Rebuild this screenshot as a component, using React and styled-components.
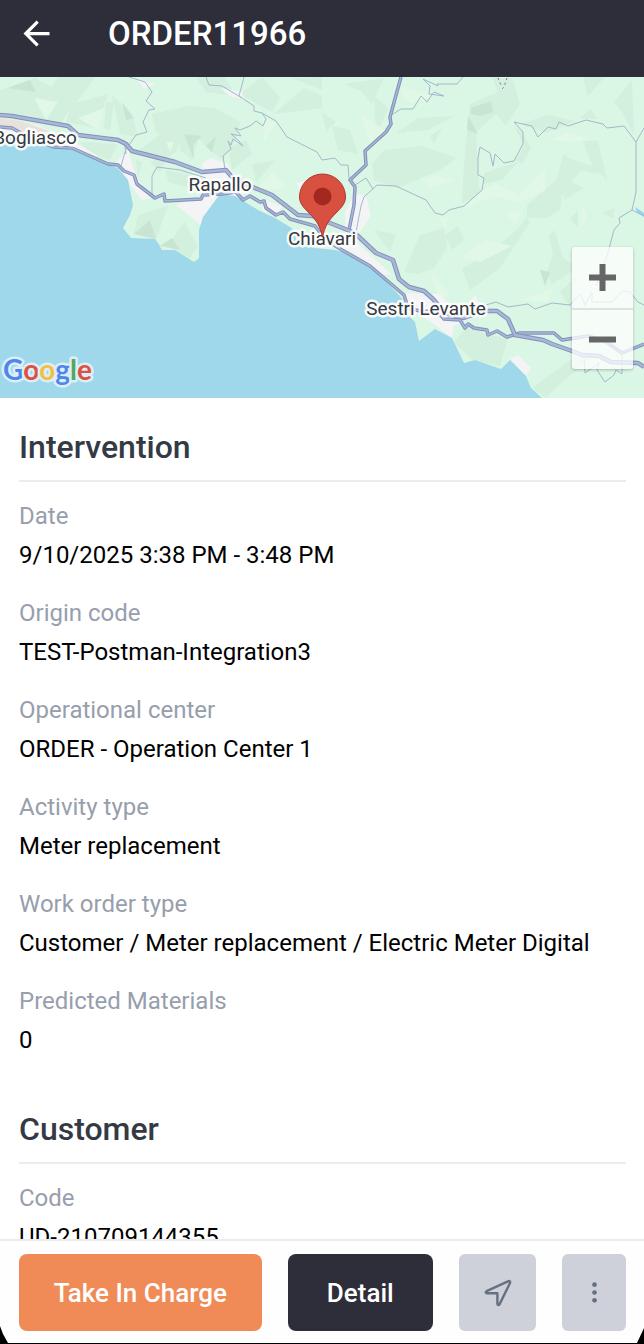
import styled, { createGlobalStyle } from "styled-components";
import { MdArrowBack } from "react-icons/md";
import { IoEllipsisVertical } from "react-icons/io5";

const GlobalStyle = createGlobalStyle`
    * {
        box-sizing: border-box;
    }

    body {
        margin: 0;
        background-color: #000000;
        font-family: Roboto, "Liberation Sans", sans-serif;
    }

    button {
        border: none;
        padding: 0;
        font-family: inherit;
        cursor: pointer;
    }
`;

const Screen = styled.div`
    display: flex;
    flex-direction: column;
    height: 100vh;
    padding-bottom: 1px;
`;

const Header = styled.header`
    display: flex;
    align-items: center;
    flex-shrink: 0;
    gap: 52px;
    height: 77px;
    padding: 0 17px 10px;
    background-color: #2d2e3a;
    color: #ffffff;

    h1 {
        margin: 0;
        font-size: 33px;
        line-height: 40px;
        font-weight: 500;
    }
`;

const BackButton = styled.button`
    display: flex;
    background: none;
    color: #ffffff;
    font-size: 39px;
`;

const Content = styled.main`
    flex: 1;
    min-height: 0;
    overflow: hidden;
    background-color: #ffffff;
`;

const MapBox = styled.div`
    position: relative;
    height: 321px;

    > svg {
        display: block;
        width: 100%;
        height: 100%;
    }
`;

const ZoomControl = styled.div`
    position: absolute;
    right: 11px;
    bottom: 29px;
    width: 61px;
    border-radius: 3px;
    background-color: rgba(255, 255, 255, 0.75);
    box-shadow: 0 1px 3px rgba(0, 0, 0, 0.25);
`;

const ZoomButton = styled.button`
    display: flex;
    align-items: center;
    justify-content: center;
    width: 100%;
    height: 61px;
    background: none;

    & + & {
        border-top: 2px solid rgba(0, 0, 0, 0.1);
    }
`;

const Section = styled.section`
    padding: 25px 18px 0 19px;

    h2 {
        margin: 0;
        padding-bottom: 9px;
        border-bottom: 2px solid #ebecf0;
        color: #343a44;
        font-size: 32px;
        line-height: 48px;
        font-weight: 500;
    }

    dl {
        margin: 0;
        padding-top: 16px;
    }
`;

const Field = styled.div`
    margin-bottom: 18px;

    dt {
        color: #979eac;
        font-size: 24px;
        line-height: 36px;
    }

    dd {
        margin: 0;
        color: #000000;
        font-size: 24px;
        line-height: 43px;
    }
`;

const Footer = styled.footer`
    display: flex;
    flex-shrink: 0;
    gap: 26px;
    padding: 13px 18px 12px 19px;
    border-top: 2px solid #ebebec;
    background-color: #fefefe;
    clip-path: polygon(0 0, 100% 0, 100% calc(100% - 15px), calc(100% - 7px) 100%, 8px 100%, 3px calc(100% - 9px), 0 calc(100% - 17px));
`;

const ActionButton = styled.button`
    flex: ${(props) => props.$grow} 1 0;
    height: 77px;
    border-radius: 8px;
    background-color: ${(props) => props.$color};
    color: #ffffff;
    font-size: 26px;
    line-height: 30px;
    font-weight: 500;
    white-space: nowrap;
`;

const IconButton = styled.button`
    display: flex;
    align-items: center;
    justify-content: center;
    width: ${(props) => props.$width}px;
    height: 77px;
    border-radius: 6px;
    background-color: #ced1d9;
    color: #677080;
    font-size: 25px;
`;

const PlaceName = styled.text`
    font-size: 19px;
    fill: #36393d;
    stroke: #ffffff;
    stroke-width: 5px;
    stroke-linejoin: round;
    stroke-opacity: 0.9;
    paint-order: stroke;
    text-anchor: middle;
`;

const Logo = styled.text`
    font-family: Lato, sans-serif;
    font-size: 28px;
    font-weight: 700;
    stroke: #dceff8;
    stroke-width: 5px;
    stroke-linejoin: round;
    paint-order: stroke;
`;

const sea =
    "0,134 20,139 50,147 75,150 105,164 118,168 128,180 133,205 130,215 123,228 131,238 155,239 158,243 162,250 175,250 194,262 199,258 199,230 203,217 220,194 235,196 245,202 258,210 275,218 290,227 300,236 315,248 335,250 350,254 380,275 400,296 405,304 408,315 415,322 419,341 435,329 452,338 464,363 475,360 501,369 510,360 526,376 531,388 542,398 0,398";

const hills = [
    "0,90 35,78 75,100 60,125 30,116 0,112",
    "58,77 95,77 70,112 50,90",
    "72,104 108,94 96,128 66,122",
    "106,102 114,102 110,130 104,128",
    "112,95 132,115 138,137 120,134",
    "152,114 188,106 215,108 240,122 236,139 222,160 210,150 196,136 176,140 156,132",
    "140,150 165,130 182,136 176,152 160,162",
    "180,128 200,134 192,160 180,150",
    "150,162 172,150 160,172",
    "196,77 224,77 236,96 206,92",
    "240,94 262,77 280,98 272,112",
    "274,114 304,88 322,96 322,108",
    "292,78 322,77 322,90",
    "228,148 246,140 252,154 232,170",
    "252,164 276,160 256,182",
    "166,170 205,178 196,190 168,182",
    "80,142 118,144 110,160 90,154",
    "136,160 142,162 138,178",
    "138,215 168,206 162,222 156,240 134,234",
    "168,246 184,222 198,246 190,258",
    "344,84 384,78 372,104 362,92",
    "374,96 388,108 376,138",
    "322,112 336,122 326,132",
    "332,126 350,130 358,154 338,150",
    "372,164 384,150 422,146 456,158 440,170 398,188 374,180",
    "396,133 418,118 454,116 428,130",
    "430,136 442,128 434,144",
    "470,104 498,92 492,77 513,79 520,104 506,126 496,114 476,132 478,176 480,195 462,203 464,165",
    "520,124 548,115 575,121 560,127 545,133",
    "514,126 522,132 531,148 522,164 516,160 524,146",
    "484,173 518,162 502,180 484,184",
    "564,154 582,168 562,196 560,210 546,218 527,218 527,205 556,180",
    "562,156 598,168 600,174 568,168",
    "582,139 598,141 607,180 592,165",
    "562,178 584,188 564,200",
    "614,102 632,80 634,135 622,112",
    "583,77 605,77 588,96",
    "580,118 590,109 597,119",
    "527,218 530,222 500,268 470,290 462,268 490,254 516,230",
    "420,235 444,228 447,248 434,268 418,274 404,272",
    "445,235 458,226 464,240 452,250",
    "549,235 555,230 563,258 578,268 552,284 546,274 553,255",
    "602,213 615,208 613,218",
    "570,218 578,210 578,228",
    "374,230 396,234 390,252",
    "454,342 468,326 488,335 508,338 500,366 472,360",
    "532,388 576,356 592,358 562,382 546,398",
    "560,292 576,276 572,310",
];

const darkHills = [
    "134,234 150,220 156,239",
    "160,246 172,238 180,250",
    "471,108 491,101 493,112 480,116 471,114",
    "540,270 550,272 545,286",
    "8,88 30,80 36,92",
    "122,102 134,118 126,120",
    "184,134 202,136 193,144 194,160 188,144",
    "206,146 216,136 212,152",
    "468,116 478,134 467,130",
];

const lightHills = [
    "34,98 58,102 46,120",
    "78,118 104,108 98,130",
    "166,142 174,142 170,152",
    "262,116 276,124 264,142",
    "258,188 272,172 286,186 276,190",
    "360,114 388,132 372,148",
    "420,180 436,176 456,180 430,188",
    "550,140 568,132 594,140 568,142",
    "505,212 523,211 515,224",
    "460,258 485,240 512,246 480,262",
    "462,210 482,190 496,184 520,195 545,168 545,190 520,204 496,196 480,202",
    "430,270 450,296 438,298",
    "520,300 556,288 546,302",
    "582,205 587,216 581,230",
    "436,216 448,218 446,228",
    "396,86 434,96 410,104",
];

const towns = [
    "0,120 40,126 76,143 98,156 90,160 60,146 0,138",
    "118,160 128,150 136,176 150,198 142,200 130,184 116,168",
    "202,164 210,158 228,164 232,172 250,186 240,198 220,194 202,226 176,205 202,196",
    "264,200 282,206 276,216 262,210",
    "296,183 306,181 302,192",
    "345,212 355,193 366,196 371,216 360,232 346,228",
    "300,236 336,236 358,244 374,258 392,275 382,274 352,252 326,244",
    "404,293 440,294 450,306 468,310 474,294 486,312 454,326 452,338 434,324 410,310",
    "510,359 518,355 531,368 526,376",
    "220,88 242,92 244,100 230,96",
    "136,79 155,84 144,89",
];

const thinRoads = [
    "129,77 145,82 152,92 146,101 155,109 149,110 143,122 147,132 136,135 126,149 121,166",
    "124,140 126,154",
    "206,77 209,85 222,86 242,98 254,106 254,111 262,113 276,121 287,137 317,152 322,160",
    "244,77 239,96 242,98",
    "262,113 266,119 263,126 256,121 250,126 240,130 235,128 241,136 231,134 238,140 243,146 233,139 231,145 228,141 231,149 223,156 225,170",
    "152,196 152,176 157,167 180,170 206,178",
    "393,114 401,109 413,109 421,96 427,102 434,92 444,96 429,94 430,86 423,79 438,86 437,84 457,84 463,77",
    "322,160 335,158 341,165 348,165 349,178",
    "355,185 366,178 373,189",
    "356,232 361,206 364,197 377,185 396,186 426,200 435,213 443,215 449,210 464,206 482,190 484,178 478,175 478,158 480,147 490,153 493,166 495,154 504,163 514,161 523,144 523,132 514,122 532,126 538,137 548,127 556,129 559,122 568,126 586,120 603,124 607,128 624,126 636,142 644,128",
    "636,142 636,192 632,210 619,218 620,223 614,230 607,256 596,286",
    "632,210 644,216",
    "486,305 496,302 508,307 528,304 535,309 552,303 570,305 580,294 585,305 592,292 592,302 612,302 622,291 630,292 638,302 644,305",
    "584,358 585,373 599,363 597,370 605,382 614,375 616,370 622,374 622,352",
];

const mainRoads = [
    "0,127 12,128 30,138 54,147 72,148 108,164 118,165 124,171 134,175 137,184 155,198 164,194 165,201 201,199 203,195 222,194 236,192 243,200 250,196 260,202 264,201 266,208 276,215 283,212 290,219 315,226 326,240 342,250 370,266 404,295 408,308 420,311 438,312 444,319 460,320 465,328 468,324 474,328 487,330 488,335 497,331 507,337 520,333 554,333 562,340 588,336 605,341 622,353 644,344",
    "401,77 390,117 391,124 386,132 365,151 366,165 350,180 355,187 354,205 349,230",
];

const highway =
    "0,115 12,116 68,126 78,135 118,140 126,144 132,151 175,162 202,172 226,170 232,177 250,186 272,195 298,215 312,216 330,223 350,231 358,236 376,253 393,260 399,279 409,287 424,291 433,299 445,313 464,318 484,311 497,311 508,319 515,335 543,340 552,344 572,351 582,355 599,356 611,362 638,363 644,367";

const places = [
    { name: "Bogliasco", x: 35, y: 144 },
    { name: "Rapallo", x: 220, y: 191 },
    { name: "Chiavari", x: 322, y: 245 },
    { name: "Sestri Levante", x: 426, y: 315 },
];

const intervention = [
    { label: "Date", value: "9/10/2025 3:38 PM - 3:48 PM" },
    { label: "Origin code", value: "TEST-Postman-Integration3" },
    { label: "Operational center", value: "ORDER - Operation Center 1" },
    { label: "Activity type", value: "Meter replacement" },
    { label: "Work order type", value: "Customer / Meter replacement / Electric Meter Digital" },
    { label: "Predicted Materials", value: "0" },
];

const customer = [{ label: "Code", value: "UD-210709144355" }];

function AreaMap() {
    return (
        <svg viewBox="0 77 644 321" preserveAspectRatio="xMidYMid slice">
            <rect y="77" width="644" height="321" fill="#daf6e4" />
            {hills.map((points) => <polygon key={points} points={points} fill="#d3efde" />)}
            {darkHills.map((points) => <polygon key={points} points={points} fill="#c8e5d4" />)}
            {lightHills.map((points) => <polygon key={points} points={points} fill="#e0f8e5" />)}
            {towns.map((points) => <polygon key={points} points={points} fill="#f4f4f6" />)}
            <polygon points="0,118 20,121 50,131 40,134 0,128" fill="#e9e2dc" />
            <polygon points={sea} fill="#9fd8ea" />
            <polygon points="635,207 644,213 644,217 637,212" fill="#90d5ed" />
            <g fill="none" strokeLinejoin="round">
                {thinRoads.map((points) => <polyline key={points} points={points} stroke="#a4b8cc" />)}
                {mainRoads.map((points) => <polyline key={points} points={points} stroke="#8090ba" strokeWidth="3.500" />)}
                {mainRoads.map((points) => <polyline key={points} points={points} stroke="#a9b6d5" strokeWidth="1.500" />)}
                <polyline points={highway} stroke="#8090ba" strokeWidth="4.500" />
                <polyline points={highway} stroke="#a9b6d5" strokeWidth="2.500" />
                <path d="M498 78 l3 7 M507 78 l-3 9 l-2 2" stroke="#777777" strokeDasharray="2 3" />
            </g>
            {places.map((place) => (
                <PlaceName key={place.name} x={place.x} y={place.y}>{place.name}</PlaceName>
            ))}
            <path
                d="M322.500 237 C320 226 317 221 309 213 C303 207 299.500 203 299.500 197 A23 23 0 0 1 345.500 197 C345.500 203 342 207 336 213 C328 221 325 226 322.500 237 Z"
                fill="#d85040"
                stroke="#b13a2e"
            />
            <circle cx="322.500" cy="196.500" r="9" fill="#a3281f" />
            <Logo x="3" y="380">
                <tspan fill="#4f86ec">G</tspan>
                <tspan fill="#dc5142">o</tspan>
                <tspan fill="#f2bf42">o</tspan>
                <tspan fill="#4f86ec">g</tspan>
                <tspan fill="#58a65c">l</tspan>
                <tspan fill="#dc5142">e</tspan>
            </Logo>
        </svg>
    );
}

function NavigateIcon() {
    return (
        <svg width="28" height="28" viewBox="0 0 28 28" fill="none" stroke="currentColor" strokeWidth="2.400" strokeLinejoin="round">
            <path d="M24.500 2.200 L2.600 12.200 C1.200 12.900 1.700 14.300 3 14.300 H13.400 V24.700 C13.400 26.200 15 26.500 15.700 25 L26 4 C26.500 2.700 25.700 1.700 24.500 2.200 Z" />
        </svg>
    );
}

function FieldList({ title, fields }) {
    return (
        <Section>
            <h2>{title}</h2>
            <dl>
                {fields.map((field) => (
                    <Field key={field.label}>
                        <dt>{field.label}</dt>
                        <dd>{field.value}</dd>
                    </Field>
                ))}
            </dl>
        </Section>
    );
}

function App() {
    return (
        <Screen>
            <GlobalStyle />
            <Header>
                <BackButton aria-label="Back"><MdArrowBack /></BackButton>
                <h1>ORDER11966</h1>
            </Header>
            <Content>
                <MapBox>
                    <AreaMap />
                    <ZoomControl>
                        <ZoomButton aria-label="Zoom in">
                            <svg width="27" height="27" viewBox="0 0 27 27" stroke="#666666" strokeWidth="6">
                                <path d="M0 13.500 H27 M13.500 0 V27" />
                            </svg>
                        </ZoomButton>
                        <ZoomButton aria-label="Zoom out">
                            <svg width="27" height="27" viewBox="0 0 27 27" stroke="#666666" strokeWidth="6">
                                <path d="M0 13.500 H27" />
                            </svg>
                        </ZoomButton>
                    </ZoomControl>
                </MapBox>
                <FieldList title="Intervention" fields={intervention} />
                <FieldList title="Customer" fields={customer} />
            </Content>
            <Footer>
                <ActionButton $grow={5} $color="#f08b57">Take In Charge</ActionButton>
                <ActionButton $grow={3} $color="#2d2e3a">Detail</ActionButton>
                <IconButton $width={77} aria-label="Navigate"><NavigateIcon /></IconButton>
                <IconButton $width={64} aria-label="More"><IoEllipsisVertical /></IconButton>
            </Footer>
        </Screen>
    );
}

export default App;
